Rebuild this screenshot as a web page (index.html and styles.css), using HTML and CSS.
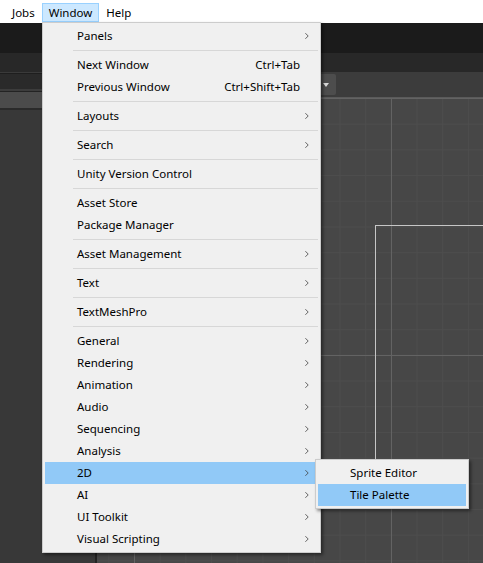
FILE: index.html
```html
<!DOCTYPE html>
<html lang="en">
<head>
<meta charset="utf-8">
<title>Window menu</title>
<link rel="stylesheet" href="styles.css">
</head>
<body>
<div class="app">
  <nav class="menubar">
    <span class="mb-item">Jobs</span>
    <span class="mb-item active">Window</span>
    <span class="mb-item">Help</span>
  </nav>
  <div class="main-toolbar"></div>
  <div class="tabbar"></div>
  <div class="content">
    <aside class="left-panel">
      <div class="lp-line"></div>
      <div class="lp-head"></div>
      <div class="lp-line2"></div>
      <div class="lp-search"></div>
      <div class="lp-line3"></div>
      <div class="lp-body"></div>
    </aside>
    <div class="splitter"></div>
    <section class="scene">
      <div class="scene-toolbar">
        <div class="dropdown"><span class="tri"></span></div>
      </div>
      <div class="grid">
        <div class="bounds"></div>
      </div>
    </section>
  </div>

  <div class="menu">
    <div class="item"><span class="label">Panels</span><span class="arrow"><svg width="5" height="8" viewBox="0 0 5 8"><polyline points="0.5,0.5 4,4 0.5,7.5" fill="none" stroke="#3c3c3c" stroke-width="1"/></svg></span></div>
    <div class="sep"></div>
    <div class="item"><span class="label">Next Window</span><span class="shortcut">Ctrl+Tab</span><span class="arrow"></span></div>
    <div class="item"><span class="label">Previous Window</span><span class="shortcut">Ctrl+Shift+Tab</span><span class="arrow"></span></div>
    <div class="sep"></div>
    <div class="item"><span class="label">Layouts</span><span class="arrow"><svg width="5" height="8" viewBox="0 0 5 8"><polyline points="0.5,0.5 4,4 0.5,7.5" fill="none" stroke="#3c3c3c" stroke-width="1"/></svg></span></div>
    <div class="sep"></div>
    <div class="item"><span class="label">Search</span><span class="arrow"><svg width="5" height="8" viewBox="0 0 5 8"><polyline points="0.5,0.5 4,4 0.5,7.5" fill="none" stroke="#3c3c3c" stroke-width="1"/></svg></span></div>
    <div class="sep"></div>
    <div class="item"><span class="label">Unity Version Control</span><span class="arrow"></span></div>
    <div class="sep"></div>
    <div class="item"><span class="label">Asset Store</span><span class="arrow"></span></div>
    <div class="item"><span class="label">Package Manager</span><span class="arrow"></span></div>
    <div class="sep"></div>
    <div class="item"><span class="label">Asset Management</span><span class="arrow"><svg width="5" height="8" viewBox="0 0 5 8"><polyline points="0.5,0.5 4,4 0.5,7.5" fill="none" stroke="#3c3c3c" stroke-width="1"/></svg></span></div>
    <div class="sep"></div>
    <div class="item"><span class="label">Text</span><span class="arrow"><svg width="5" height="8" viewBox="0 0 5 8"><polyline points="0.5,0.5 4,4 0.5,7.5" fill="none" stroke="#3c3c3c" stroke-width="1"/></svg></span></div>
    <div class="sep"></div>
    <div class="item"><span class="label">TextMeshPro</span><span class="arrow"><svg width="5" height="8" viewBox="0 0 5 8"><polyline points="0.5,0.5 4,4 0.5,7.5" fill="none" stroke="#3c3c3c" stroke-width="1"/></svg></span></div>
    <div class="sep"></div>
    <div class="item"><span class="label">General</span><span class="arrow"><svg width="5" height="8" viewBox="0 0 5 8"><polyline points="0.5,0.5 4,4 0.5,7.5" fill="none" stroke="#3c3c3c" stroke-width="1"/></svg></span></div>
    <div class="item"><span class="label">Rendering</span><span class="arrow"><svg width="5" height="8" viewBox="0 0 5 8"><polyline points="0.5,0.5 4,4 0.5,7.5" fill="none" stroke="#3c3c3c" stroke-width="1"/></svg></span></div>
    <div class="item"><span class="label">Animation</span><span class="arrow"><svg width="5" height="8" viewBox="0 0 5 8"><polyline points="0.5,0.5 4,4 0.5,7.5" fill="none" stroke="#3c3c3c" stroke-width="1"/></svg></span></div>
    <div class="item"><span class="label">Audio</span><span class="arrow"><svg width="5" height="8" viewBox="0 0 5 8"><polyline points="0.5,0.5 4,4 0.5,7.5" fill="none" stroke="#3c3c3c" stroke-width="1"/></svg></span></div>
    <div class="item"><span class="label">Sequencing</span><span class="arrow"><svg width="5" height="8" viewBox="0 0 5 8"><polyline points="0.5,0.5 4,4 0.5,7.5" fill="none" stroke="#3c3c3c" stroke-width="1"/></svg></span></div>
    <div class="item"><span class="label">Analysis</span><span class="arrow"><svg width="5" height="8" viewBox="0 0 5 8"><polyline points="0.5,0.5 4,4 0.5,7.5" fill="none" stroke="#3c3c3c" stroke-width="1"/></svg></span></div>
    <div class="item hl"><span class="label">2D</span><span class="arrow"><svg width="5" height="8" viewBox="0 0 5 8"><polyline points="0.5,0.5 4,4 0.5,7.5" fill="none" stroke="#3c3c3c" stroke-width="1"/></svg></span></div>
    <div class="item"><span class="label">AI</span><span class="arrow"><svg width="5" height="8" viewBox="0 0 5 8"><polyline points="0.5,0.5 4,4 0.5,7.5" fill="none" stroke="#3c3c3c" stroke-width="1"/></svg></span></div>
    <div class="item"><span class="label">UI Toolkit</span><span class="arrow"><svg width="5" height="8" viewBox="0 0 5 8"><polyline points="0.5,0.5 4,4 0.5,7.5" fill="none" stroke="#3c3c3c" stroke-width="1"/></svg></span></div>
    <div class="item"><span class="label">Visual Scripting</span><span class="arrow"><svg width="5" height="8" viewBox="0 0 5 8"><polyline points="0.5,0.5 4,4 0.5,7.5" fill="none" stroke="#3c3c3c" stroke-width="1"/></svg></span></div>
  </div>

  <div class="menu submenu">
    <div class="item"><span class="label">Sprite Editor</span></div>
    <div class="item hl"><span class="label">Tile Palette</span></div>
  </div>
</div>
</body>
</html>
```

FILE: styles.css
```css
* { box-sizing: border-box; }
html, body { margin: 0; padding: 0; }
body {
  width: 483px;
  height: 563px;
  overflow: hidden;
  font-family: "Noto Sans", "Segoe UI", "Liberation Sans", sans-serif;
  font-size: 11.5px;
  color: #000;
  background: #383838;
}
.app {
  position: relative;
  width: 483px;
  height: 563px;
  display: flex;
  flex-direction: column;
}
.menubar {
  height: 23px;
  flex: none;
  background: #fff;
  display: flex;
  align-items: flex-start;
  padding-left: 5px;
}
.mb-item {
  height: 19px;
  margin-top: 3px;
  line-height: 17px;
  padding: 0 6px;
  border: 1px solid transparent;
}
.mb-item.active {
  background: #cce8ff;
  border-color: #99d1ff;
}
.main-toolbar { height: 30px; flex: none; background: #1b1b1b; }
.tabbar { height: 19px; flex: none; background: #282828; }
.content { flex: 1; display: flex; min-height: 0; }
.left-panel {
  width: 95px;
  flex: none;
  display: flex;
  flex-direction: column;
  background: #383838;
}
.lp-line { height: 2px; background: #3a3a3a; border-bottom: 1px solid #1e1e1e; }
.lp-head { height: 15px; background: #2a2a2a; }
.lp-line2 { height: 3px; background: #3c3c3c; border-bottom: 1px solid #232323; }
.lp-search { height: 16px; background: #4b4b4b; }
.lp-line3 { height: 2px; background: #2a2a2a; }
.lp-body { flex: 1; background: #383838; }
.splitter { width: 2px; flex: none; background: #232323; }
.scene { flex: 1; display: flex; flex-direction: column; min-width: 0; }
.scene-toolbar {
  height: 26px;
  flex: none;
  background: #3c3c3c;
  border-bottom: 1px solid #5a5a5a;
  display: flex;
  align-items: center;
  padding-left: 203px;
}
.dropdown {
  width: 36px;
  height: 21px;
  background: #4d4d4d;
  border-radius: 2px;
  display: flex;
  align-items: center;
  justify-content: flex-end;
  padding-right: 7px;
}
.tri {
  width: 0; height: 0;
  border-left: 3.5px solid transparent;
  border-right: 3.5px solid transparent;
  border-top: 4px solid #d8d8d8;
}
.grid {
  flex: 1;
  position: relative;
  background-color: #474747;
  background-image:
    linear-gradient(to right, #636363 1px, transparent 1px),
    linear-gradient(to bottom, #636363 1px, transparent 1px),
    linear-gradient(to right, #4d4d4d 1px, transparent 1px),
    linear-gradient(to bottom, #4d4d4d 1px, transparent 1px);
  background-size: 257px 100%, 100% 257px, 25.7px 100%, 100% 25.7px;
  background-position: 37px 0, 0 0, 11.3px 0, 0 0;
  overflow: hidden;
}
.bounds {
  position: absolute;
  left: 278px;
  top: 127px;
  width: 300px;
  height: 250px;
  border-left: 1px solid #c6c6c6;
  border-top: 1px solid #c6c6c6;
}
.menu {
  position: absolute;
  left: 42px;
  top: 22px;
  width: 279px;
  background: #f0f0f0;
  border: 1px solid #cccccc;
  padding: 2px 0;
  box-shadow: 2px 2px 3px rgba(0, 0, 0, 0.45);
  z-index: 2;
}
.item {
  height: 22px;
  margin: 0 2px;
  display: flex;
  align-items: center;
  padding: 0 9px 1px 32px;
  white-space: nowrap;
}
.item.hl { background: #91c9f7; }
.label { flex: 1; }
.shortcut { margin-right: 5px; }
.arrow { width: 4px; height: 8px; display: flex; overflow: visible; }
.arrow svg { display: block; }
.sep {
  height: 7px;
  margin: 0 2px 0 30px;
  background: linear-gradient(#d7d7d7, #d7d7d7) 0 3px / 100% 1px no-repeat;
}
.submenu {
  left: 315px;
  top: 459px;
  width: 154px;
  z-index: 3;
}
```
